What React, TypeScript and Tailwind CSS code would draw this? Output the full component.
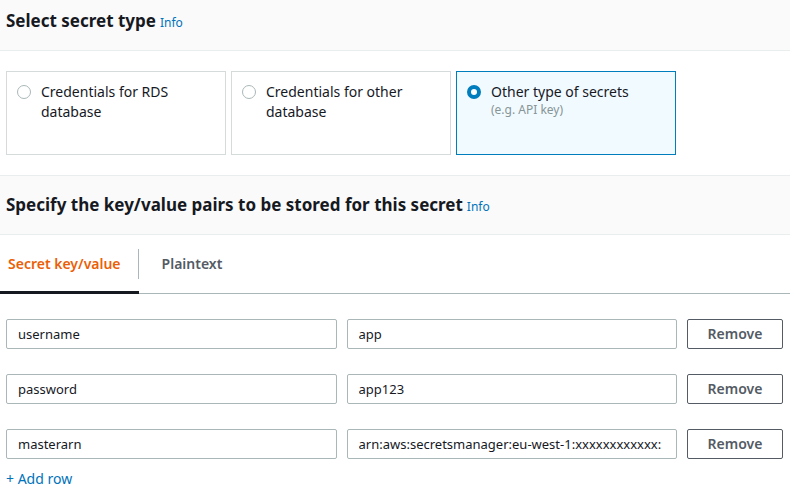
import { useState } from "react";

const secretTypes = [
  { id: "rds", label: "Credentials for RDS database", hint: "" },
  { id: "db", label: "Credentials for other database", hint: "" },
  { id: "other", label: "Other type of secrets", hint: "(e.g. API key)" },
];

const initialRows = [
  { key: "username", value: "app" },
  { key: "password", value: "app123" },
  { key: "masterarn", value: "arn:aws:secretsmanager:eu-west-1:xxxxxxxxxxxx:" },
];

function SectionHeader({ title }: { title: string }) {
  return (
    <header className="flex items-baseline gap-1 border-b border-[#eaeded] bg-[#fafafa] px-1.5 pb-[15px]">
      <h2 className="text-[17px] leading-7 font-bold">{title}</h2>
      <a href="#info" className="text-xs text-[#0073bb]">
        Info
      </a>
    </header>
  );
}

const inputClass =
  "h-[30px] min-w-0 flex-1 rounded-xs border border-[#aab7b8] bg-white px-[11px] text-[13px] outline-none";

export default function App() {
  const [selected, setSelected] = useState("other");
  const [rows, setRows] = useState(initialRows);

  const update = (index: number, field: "key" | "value", text: string) =>
    setRows(rows.map((row, i) => (i === index ? { ...row, [field]: text } : row)));

  return (
    <main className="bg-white font-['Noto_Sans',sans-serif] text-sm text-[#16191f]">
      <section>
        <div className="bg-[#fafafa] pt-[7px]">
          <SectionHeader title="Select secret type" />
        </div>
        <fieldset aria-label="Secret type" className="flex gap-[5px] px-1.5 py-5">
          {secretTypes.map((type) => (
            <label
              key={type.id}
              className="flex min-h-[84px] w-[220px] items-start gap-2.5 border border-[#d5dbdb] px-2.5 py-2.5 has-checked:border-[#007dbc] has-checked:bg-[#f1faff]"
            >
              <input
                type="radio"
                name="secret-type"
                checked={selected === type.id}
                onChange={() => setSelected(type.id)}
                className="mt-[3px] size-3.5 shrink-0 appearance-none rounded-full border border-[#aab7b8] bg-white checked:border-4 checked:border-[#007dbc]"
              />
              <span className="leading-5">
                {type.label}
                {type.hint && (
                  <small className="block text-xs leading-4 text-[#879596]">{type.hint}</small>
                )}
              </span>
            </label>
          ))}
        </fieldset>
      </section>

      <section className="border-t border-[#eaeded]">
        <div className="bg-[#fafafa] pt-[15px]">
          <SectionHeader title="Specify the key/value pairs to be stored for this secret" />
        </div>
        <div role="tablist" className="flex border-b border-[#aab7b8] font-semibold">
          <button
            role="tab"
            aria-selected="true"
            className="-mb-px border-b-3 border-[#16191f] pt-3.5 pb-3 text-[#eb5f07]"
          >
            <span className="block border-r border-[#aab7b8] py-[5px] pr-[17px] pl-2 leading-5">
              Secret key/value
            </span>
          </button>
          <button role="tab" aria-selected="false" className="pt-3.5 pr-5 pb-3.5 pl-[23px] text-[#545b64]">
            Plaintext
          </button>
        </div>

        <div className="flex flex-col gap-[25px] pt-[25px] pr-[7px] pl-1.5">
          {rows.map((row, i) => (
            <div key={i} className="flex gap-2.5">
              <input
                aria-label="Key"
                className={inputClass}
                value={row.key}
                onChange={(e) => update(i, "key", e.target.value)}
              />
              <input
                aria-label="Value"
                className={inputClass}
                value={row.value}
                onChange={(e) => update(i, "value", e.target.value)}
              />
              <button
                className="h-[30px] w-24 rounded-xs border border-[#545b64] bg-white font-semibold text-[#545b64]"
                onClick={() => setRows(rows.filter((_, n) => n !== i))}
              >
                Remove
              </button>
            </div>
          ))}
        </div>
        <button
          className="mt-2.5 px-1.5 leading-5 text-[#0073bb]"
          onClick={() => setRows([...rows, { key: "", value: "" }])}
        >
          + Add row
        </button>
      </section>
    </main>
  );
}
